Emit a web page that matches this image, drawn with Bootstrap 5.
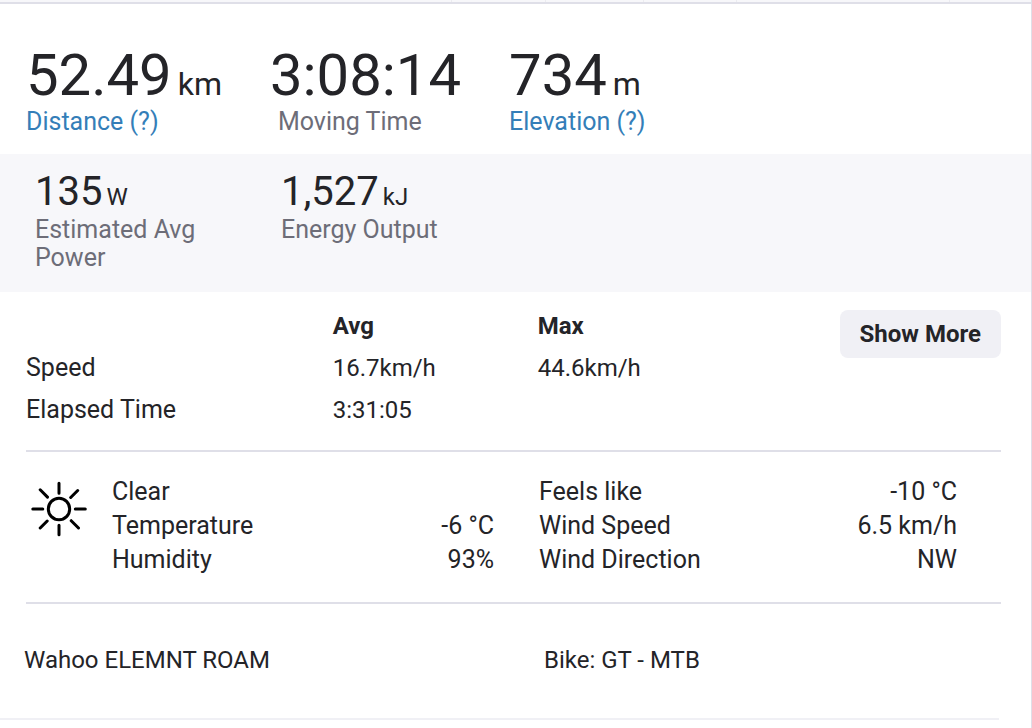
<!DOCTYPE html>
<html lang="en">
<head>
<meta charset="utf-8">
<meta name="viewport" content="width=device-width, initial-scale=1">
<title>Ride summary</title>
<link href="https://cdn.jsdelivr.net/npm/bootstrap@5.3.0/dist/css/bootstrap.min.css" rel="stylesheet">
<style>
  body { font-family: Roboto, "Liberation Sans", sans-serif; font-size: 24px; line-height: 28px; color: #242428; background: #fff; }
  .activity { border-right: 1px solid #dfdfe8; min-height: 100vh; }
  .tab-edge { display: grid; grid-template-columns: 452fr 94fr 98fr 93fr 213fr 81fr; height: 4px; background: #f7f7fa; border-bottom: 2px solid #dfdfe8; }
  .tab-edge span { border-right: 1px solid #ebebf0; }
  .tab-edge span:last-child { border: 0; }
  .main-stats { gap: 12px 48px; padding: 38px 26px 18px; }
  .stat-xl { font-size: 58px; line-height: 66px; }
  .stat-xl small { font-size: 32px; line-height: 1; margin-left: 6px; }
  .stat-lg { font-size: 40px; line-height: 44px; margin-bottom: 2px; }
  .stat-lg small { font-size: 24px; line-height: 1; margin-left: 4px; }
  .stat-label { display: block; font-size: 25px; color: #6d6d78; }
  a.stat-label { color: #347eb8; text-decoration: none; }
  .power-band { background: #f7f7fa; padding: 16px 12px 20px 35px; }
  .details { padding: 13px 30px 19px 26px; }
  .details table { table-layout: fixed; line-height: 42px; }
  .details th, .details td { padding: 0; }
  .details tbody th { font-weight: 400; font-size: 25px; }
  .name-col { width: 37.7%; }
  .num-col { width: 25.2%; }
  .btn-more { background: #f0f0f5; color: #242428; border: 0; border-radius: 8px; font-size: 24px; line-height: 28px; font-weight: 700; padding: 10px 20px; margin-top: 5px; white-space: nowrap; }
  .btn-more:hover { background: #e6e6ed; }
  .rule { height: 2px; background: #dfdfe8; margin: 0 30px 0 26px; }
  .weather { display: grid; grid-template-columns: 56px 407fr 463fr; padding: 23px 74px 25px 31px; font-size: 25px; line-height: 34px; }
  .weather svg { margin-top: 6px; }
  .weather dl { margin: 0 0 0 25px; }
  .weather dl + dl { margin-left: 45px; }
  .weather dt, .weather dd { font-weight: 400; margin: 0; }
  .gear { display: grid; grid-template-columns: 520fr 487fr; padding: 42px 0 44px 24px; }
  .end-rule { height: 2px; background: #f0f0f5; margin-right: 32px; }
</style>
</head>
<body>
<main class="activity">
  <div class="tab-edge" aria-hidden="true"><span></span><span></span><span></span><span></span><span></span><span></span></div>

  <section class="main-stats d-flex flex-wrap">
    <div>
      <div class="stat-xl">52.49<small>km</small></div>
      <a class="stat-label" href="#">Distance (?)</a>
    </div>
    <div>
      <div class="stat-xl">3:08:14</div>
      <div class="stat-label ps-2">Moving Time</div>
    </div>
    <div>
      <div class="stat-xl">734<small>m</small></div>
      <a class="stat-label" href="#">Elevation (?)</a>
    </div>
  </section>

  <section class="power-band">
    <div class="row gx-0">
      <div class="col-3 pe-5">
        <div class="stat-lg">135<small>W</small></div>
        <div class="stat-label">Estimated Avg Power</div>
      </div>
      <div class="col-3">
        <div class="stat-lg">1,527<small>kJ</small></div>
        <div class="stat-label">Energy Output</div>
      </div>
    </div>
  </section>

  <section class="details d-flex align-items-start">
    <table class="flex-grow-1">
      <thead>
        <tr><td class="name-col"></td><th class="num-col" scope="col">Avg</th><th scope="col">Max</th></tr>
      </thead>
      <tbody>
        <tr><th scope="row">Speed</th><td>16.7km/h</td><td>44.6km/h</td></tr>
        <tr><th scope="row">Elapsed Time</th><td>3:31:05</td><td></td></tr>
      </tbody>
    </table>
    <button type="button" class="btn btn-more">Show More</button>
  </section>

  <div class="rule"></div>

  <section class="weather">
    <svg width="56" height="56" viewBox="0 0 56 56" fill="none" stroke="#000" stroke-width="3" stroke-linecap="round" role="img" aria-label="Sunny">
      <circle cx="28" cy="28" r="10.7"/>
      <path d="M28 2.3v10M28 44.2v9.6M1.800 28h10M44.300 28h10M9.200 8.800l7.300 7.300M46.700 9.500l-7 7M9.200 47l7-7M47.500 47l-7.300-7.300"/>
    </svg>
    <dl>
      <div class="d-flex justify-content-between"><dt>Clear</dt></div>
      <div class="d-flex justify-content-between"><dt>Temperature</dt><dd>-6 °C</dd></div>
      <div class="d-flex justify-content-between"><dt>Humidity</dt><dd>93%</dd></div>
    </dl>
    <dl>
      <div class="d-flex justify-content-between"><dt>Feels like</dt><dd>-10 °C</dd></div>
      <div class="d-flex justify-content-between"><dt>Wind Speed</dt><dd>6.5 km/h</dd></div>
      <div class="d-flex justify-content-between"><dt>Wind Direction</dt><dd>NW</dd></div>
    </dl>
  </section>

  <div class="rule"></div>

  <section class="gear">
    <div>Wahoo ELEMNT ROAM</div>
    <div>Bike: GT - MTB</div>
  </section>

  <div class="end-rule"></div>
</main>
<script src="https://cdn.jsdelivr.net/npm/bootstrap@5.3.0/dist/js/bootstrap.bundle.min.js"></script>
</body>
</html>
